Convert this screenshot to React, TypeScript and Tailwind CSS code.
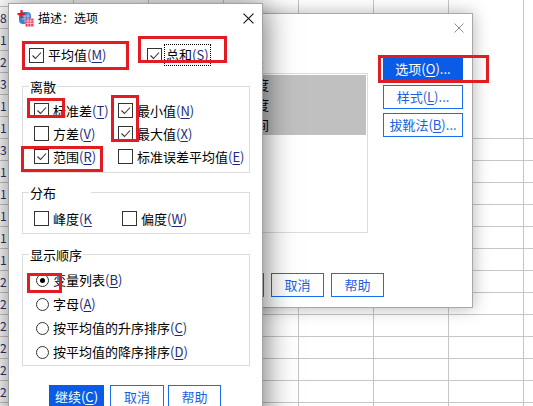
import React from 'react';

const LEFT_TEXT = ['8', '1', '2', '3', '1', '1', '3', '1', '1', '1', '1', '1', '2', '2', '2', '2', '2', '2'];
const COLS = 8;
const ROWS = 20;

function Acc({ k, tone = 'text-[#1d2b7a]' }: { k: string; tone?: string }) {
  return (
    <span className={tone}>
      (<span className="underline underline-offset-2">{k}</span>)
    </span>
  );
}

function Box({ on }: { on?: boolean }) {
  return (
    <span className="flex h-[15px] w-[15px] shrink-0 items-center justify-center border border-[#333] bg-white">
      {on && (
        <svg viewBox="0 0 13 13" className="h-[13px] w-[13px]">
          <path d="M2.5 6.5 L5.5 9.5 L11 3.5" fill="none" stroke="#333" strokeWidth="1.1" />
        </svg>
      )}
    </span>
  );
}

function Radio({ on }: { on?: boolean }) {
  return (
    <span className="flex h-[13px] w-[13px] shrink-0 items-center justify-center rounded-full border border-[#333] bg-white">
      {on && <span className="h-[5px] w-[5px] rounded-full bg-black" />}
    </span>
  );
}

function Check({ on, children }: { on?: boolean; children: React.ReactNode }) {
  return (
    <div className="flex items-center gap-[4px]">
      <Box on={on} />
      <span className="leading-[16px]">{children}</span>
    </div>
  );
}

function Group({ label, labelClass, className, children }: { label: string; labelClass: string; className: string; children: React.ReactNode }) {
  return (
    <div className={`relative ml-[13px] w-[228px] border border-[#dcdcdc] ${className}`}>
      <span className={`absolute -top-[9px] left-[6px] bg-white pl-[1px] leading-[18px] ${labelClass}`}>{label}</span>
      {children}
    </div>
  );
}

function Close({ color, size }: { color: string; size: string }) {
  return (
    <svg viewBox="0 0 10 10" className={size}>
      <path d="M0.5 0.5 L9.5 9.5 M9.5 0.5 L0.5 9.5" stroke={color} strokeWidth="1" />
    </svg>
  );
}

function AppIcon() {
  return (
    <svg viewBox="0 0 17 18" className="h-[18px] w-[17px]">
      <rect x="2" y="3" width="12" height="12" rx="4" fill="#3f7fd6" />
      <path d="M5 7h8M5 10h8M8 4v10M11 4v10" stroke="#b9d3f5" strokeWidth="0.8" />
      <rect x="8.5" y="9.5" width="8" height="8" fill="#e8405e" />
      <path d="M8.5 12h8M8.5 14.5h8M11 9.5v8M13.7 9.5v8" stroke="#fbd0d8" strokeWidth="0.8" />
      <rect x="0.5" y="4" width="8" height="2.2" fill="#d6202c" />
      <rect x="3.4" y="1" width="2.2" height="8" fill="#d6202c" />
    </svg>
  );
}

function Btn({ children, primary, w }: { children: React.ReactNode; primary?: boolean; w: string }) {
  return (
    <div
      className={`flex h-[24px] ${w} shrink-0 items-center justify-center border leading-[16px] ${
        primary ? 'border-[#0a5ce6] bg-[#0a5ce6] text-white' : 'border-[#1a6cf2] bg-white text-[#1a5fe0]'
      }`}
    >
      {children}
    </div>
  );
}

function Mark({ className }: { className: string }) {
  return <div className={`pointer-events-none absolute border-[3px] border-[#e31c23] ${className}`} />;
}

export default function App() {
  return (
    <div className="relative h-[406px] w-[533px] overflow-hidden bg-white font-['Noto_Sans_CJK_SC',sans-serif] text-[13px] text-black">
      {/* spreadsheet behind */}
      <div className="grid grid-cols-[74px_repeat(7,75px)] grid-rows-[7px_repeat(19,22px)]">
        {Array.from({ length: ROWS * COLS }).map((_, i) => {
          const r = Math.floor(i / COLS);
          const c = i % COLS;
          const rowLine = c === 0 || r >= 6;
          return (
            <div
              key={i}
              className={`flex items-center overflow-hidden border-r border-[#c6c6c6] ${rowLine ? 'border-b' : ''}`}
            >
              {c === 0 && r > 0 && LEFT_TEXT[r - 1] && (
                <span className="text-[12px] leading-[16px] text-[#27307a]">{LEFT_TEXT[r - 1]}</span>
              )}
            </div>
          );
        })}
      </div>

      {/* dialog behind */}
      <div className="absolute left-[150px] top-[13px] flex h-[295px] w-[323px] flex-col border border-[#a8a8a8] bg-white shadow-[0_0_16px_rgba(0,0,0,0.3)]">
        <div className="flex h-[28px] items-center justify-end pr-[8px]">
          <Close color="#8c8c8c" size="h-[10px] w-[10px]" />
        </div>
        <div className="flex">
          <div className="ml-[49px] flex w-[168px] flex-col">
            <div className="mt-[14px] h-[16px] pl-[18px] leading-[16px]">变量(V):</div>
            <div className="mt-[1px] h-[160px] border border-[#dcdcdc] p-[1px]">
              {['工作满意度', '客户满意度', '排队的时间'].map(t => (
                <div key={t} className="h-[20px] bg-[#c0c0c0] pl-[2px] leading-[20px]">
                  {t}
                </div>
              ))}
            </div>
          </div>
          <div className="ml-[15px] mt-[15px] flex w-[80px] flex-col gap-[4px]">
            <Btn primary w="w-[80px]">
              选项<Acc k="O" tone="text-white" />...
            </Btn>
            <Btn w="w-[80px]">
              样式<Acc k="L" tone="text-[#1a5fe0]" />...
            </Btn>
            <Btn w="w-[80px]">
              拔靴法<Acc k="B" tone="text-[#1a5fe0]" />...
            </Btn>
          </div>
        </div>
        <div className="mb-[10px] mt-auto flex justify-end gap-[7px] pr-[88px]">
          <Btn w="w-[53px]">重置</Btn>
          <Btn w="w-[53px]">取消</Btn>
          <Btn w="w-[53px]">帮助</Btn>
        </div>
      </div>

      {/* options dialog */}
      <div className="absolute left-[8px] top-[3px] flex h-[430px] w-[255px] flex-col border border-[#a3a3a3] bg-white shadow-[2px_2px_28px_rgba(0,0,0,0.55)]">
        <div className="flex h-[28px] items-center pl-[8px] pr-[8px]">
          <AppIcon />
          <span className="ml-[4px] text-[12px] leading-[16px]">描述：选项</span>
          <span className="ml-auto">
            <Close color="#111" size="h-[11px] w-[11px]" />
          </span>
        </div>

        <div className="mt-[12px] flex h-[22px] items-center pl-[20px]">
          <div className="w-[118px]">
            <Check on>
              平均值<Acc k="M" />
            </Check>
          </div>
          <div className="flex items-center gap-[2px]">
            <Box on />
            <span className="border border-dotted border-black px-[1px] py-[2px] leading-[16px]">
              总和<Acc k="S" />
            </span>
          </div>
        </div>

        <Group label="离散" labelClass="pr-[1px]" className="mt-[20px] h-[87px] pl-[11px] pt-[12px]">
          <div className="grid grid-cols-[84px_1fr] grid-rows-[repeat(3,23px)] items-center">
            <Check on>
              标准差<Acc k="T" />
            </Check>
            <Check on>
              最小值<Acc k="N" />
            </Check>
            <Check>
              方差<Acc k="V" />
            </Check>
            <Check on>
              最大值<Acc k="X" />
            </Check>
            <Check on>
              范围<Acc k="R" />
            </Check>
            <Check>
              标准误差平均值<Acc k="E" />
            </Check>
          </div>
        </Group>

        <Group label="分布" labelClass="w-[62px]" className="mt-[19px] h-[42px] pl-[11px] pt-[14px]">
          <div className="grid h-[23px] grid-cols-[88px_1fr] items-center">
            <Check>
              峰度<span className="text-[#1d2b7a]">(<span className="underline underline-offset-2">K</span></span>
            </Check>
            <Check>
              偏度<Acc k="W" />
            </Check>
          </div>
        </Group>

        <Group label="显示顺序" labelClass="pr-[1px]" className="mt-[20px] h-[112px] pl-[13px] pt-[13px]">
          {[
            { t: '变量列表', k: 'B', on: true },
            { t: '字母', k: 'A' },
            { t: '按平均值的升序排序', k: 'C' },
            { t: '按平均值的降序排序', k: 'D' },
          ].map(o => (
            <div key={o.k} className="flex h-[24px] items-center gap-[4px]">
              <Radio on={o.on} />
              <span className="leading-[16px]">
                {o.t}
                <Acc k={o.k} />
              </span>
            </div>
          ))}
        </Group>

        <div className="ml-[40px] mt-[19px] flex">
          <Btn primary w="w-[55px]">
            继续<Acc k="C" tone="text-white" />
          </Btn>
          <div className="ml-[6px]">
            <Btn w="w-[54px]">取消</Btn>
          </div>
          <div className="ml-[4px]">
            <Btn w="w-[53px]">帮助</Btn>
          </div>
        </div>
      </div>

      {/* red annotation boxes */}
      <Mark className="left-[22px] top-[41px] h-[29px] w-[107px]" />
      <Mark className="left-[138px] top-[36px] h-[27px] w-[89px]" />
      <Mark className="left-[27px] top-[98px] h-[20px] w-[38px]" />
      <Mark className="left-[111px] top-[95px] h-[47px] w-[28px]" />
      <Mark className="left-[21px] top-[146px] h-[26px] w-[82px]" />
      <Mark className="left-[27px] top-[273px] h-[20px] w-[35px]" />
      <Mark className="left-[378px] top-[55px] h-[28px] w-[111px]" />
    </div>
  );
}
